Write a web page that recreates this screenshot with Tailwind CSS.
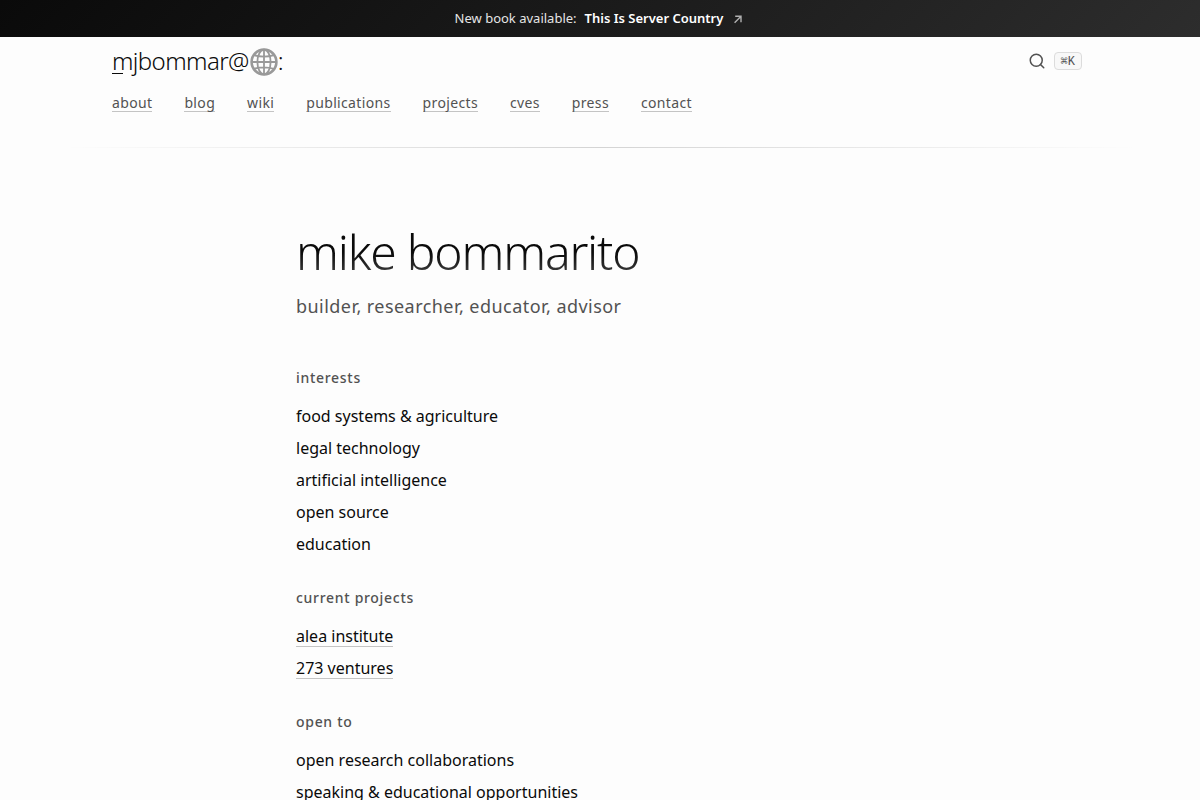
<!DOCTYPE html>
<html lang="en">
<head>
    <meta charset="UTF-8">
    <meta name="viewport" content="width=device-width, initial-scale=1.0">
    <title>mike bommarito</title>
    <script src="https://cdn.jsdelivr.net/npm/@tailwindcss/browser@4"></script>
</head>
<body class="bg-[#fdfdfd] text-[#0a0a0a] font-['Noto_Sans',sans-serif]">

    <!-- Announcement bar -->
    <a href="#book" class="flex h-[37px] items-center justify-center gap-2 bg-linear-135 from-[#0a0a0a] to-[#2d2d2d] text-[13px] text-[#e5e5e5]">
        <span>New book available:</span>
        <strong class="font-semibold text-white">This Is Server Country</strong>
        <svg class="ml-0.5 size-3 text-[#b0b0b0]" viewBox="0 0 12 12" fill="none" stroke="currentColor" stroke-width="1.4" aria-hidden="true">
            <path d="M1.6 9.8L7.8 3.4M2.2 3.2h5.8v6"/>
        </svg>
    </a>

    <header class="mx-auto max-w-5xl">
        <div class="flex items-center justify-between pt-1.5 pr-[30px] pl-6">
            <a href="/" class="flex items-center text-2xl leading-9 font-light tracking-tight">
                <span class="relative">mjbommar@<span class="absolute bottom-[5px] left-0 h-px w-[11px] bg-[#0a0a0a]"></span></span>
                <svg class="mt-0.5 ml-px size-7" viewBox="0 0 28 28" fill="none" stroke="#999" stroke-width="1.8" role="img" aria-label="globe">
                    <circle cx="14" cy="14" r="12.4" stroke-width="2.6"/>
                    <ellipse cx="14" cy="14" rx="6.6" ry="12.4"/>
                    <path d="M14 1.6v24.8M1.6 14h24.8M4 7.2q10 3 20 0M4 20.8q10 -3 20 0"/>
                </svg>
                <span>:</span>
            </a>
            <button type="button" aria-label="Search" class="flex items-center gap-2 text-[#525252]">
                <svg class="size-[18px]" viewBox="0 0 24 24" fill="none" stroke="currentColor" stroke-width="2" stroke-linecap="round" aria-hidden="true">
                    <circle cx="11" cy="11" r="8"/>
                    <path d="M21 21l-4.35-4.35"/>
                </svg>
                <kbd class="flex h-[18px] items-center rounded-sm border border-[#dcdcdc] bg-[#f8f8f8] px-1.5 pt-0.5 font-['Liberation_Mono',monospace] text-xs">⌘K</kbd>
            </button>
        </div>
        <nav class="flex gap-8 px-6 pt-4 pb-[35px] text-sm leading-4 tracking-wide text-[#525252]">
            <a href="#about" class="border-b border-[#c4c4c4]">about</a>
            <a href="#blog" class="border-b border-[#c4c4c4]">blog</a>
            <a href="#wiki" class="border-b border-[#c4c4c4]">wiki</a>
            <a href="#publications" class="border-b border-[#c4c4c4]">publications</a>
            <a href="#projects" class="border-b border-[#c4c4c4]">projects</a>
            <a href="#cves" class="border-b border-[#c4c4c4]">cves</a>
            <a href="#press" class="border-b border-[#c4c4c4]">press</a>
            <a href="#contact" class="border-b border-[#c4c4c4]">contact</a>
        </nav>
        <div class="-mx-6 h-px bg-linear-to-r from-transparent via-[#d4d4d4] to-transparent"></div>
    </header>

    <main class="mx-auto max-w-[656px] px-6 pt-[74px] pb-20">
        <h1 class="bg-linear-to-b from-[#0a0a0a] from-50% to-[#525252] bg-clip-text text-5xl leading-[60px] font-light tracking-tight text-transparent">mike bommarito</h1>
        <p class="mt-2.5 text-lg leading-7 tracking-wide text-[#525252]">builder, researcher, educator, advisor</p>

        <section class="mt-[46px]">
            <h2 class="text-sm leading-6 font-medium tracking-wider text-[#525252]">interests</h2>
            <ul class="mt-2.5 leading-8">
                <li>food systems &amp; agriculture</li>
                <li>legal technology</li>
                <li>artificial intelligence</li>
                <li>open source</li>
                <li>education</li>
            </ul>
        </section>

        <section class="mt-[26px]">
            <h2 class="text-sm leading-6 font-medium tracking-wider text-[#525252]">current projects</h2>
            <ul class="mt-2.5">
                <li class="flex h-8 items-center"><a href="#alea" class="border-b border-[#c4c4c4] leading-5">alea institute</a></li>
                <li class="flex h-8 items-center"><a href="#ventures" class="border-b border-[#c4c4c4] leading-5">273 ventures</a></li>
            </ul>
        </section>

        <section class="mt-[26px]">
            <h2 class="text-sm leading-6 font-medium tracking-wider text-[#525252]">open to</h2>
            <ul class="mt-2.5 leading-8">
                <li>open research collaborations</li>
                <li>speaking &amp; educational opportunities</li>
            </ul>
        </section>
    </main>

</body>
</html>
